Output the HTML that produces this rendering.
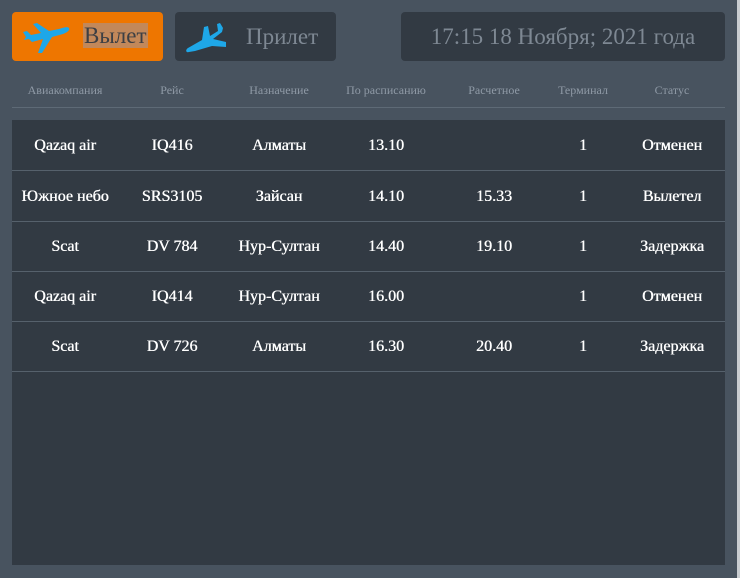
<!DOCTYPE html>
<html><head><meta charset="utf-8"><style>
html,body{margin:0;padding:0}
body{width:740px;height:578px;background:#48535f;position:relative;overflow:hidden;font-family:"Liberation Serif","DejaVu Serif",serif}
.btn{position:absolute;top:12px;height:49px;border-radius:4px}
.b1{left:12px;width:151px;background:#ee7600}
.b2{left:175px;width:161px;background:#323a43}
.b3{left:401px;width:324px;background:#323a43;color:#7e8893;font-size:23px;line-height:49px;text-align:center}
.b1 .t{position:absolute;left:71px;top:11px;height:25px;line-height:25px;padding:0 1px;background:#c2885a;color:#3c3f44;font-size:23px}
.b2 .t{position:absolute;left:71px;top:0;line-height:49px;color:#7e8893;font-size:23px}
.hd{position:absolute;top:83px;font-size:12px;color:#8f9aa6;transform:translateX(-50%);white-space:nowrap}
.hl{position:absolute;left:12px;width:713px;top:107px;height:1px;background:#5e6a76}
.panel{position:absolute;left:12px;top:120px;width:713px;height:445px;background:#323a43}
.row{position:absolute;left:0;width:713px;height:50px;border-bottom:1px solid #56616c}
.c{position:absolute;top:1px;line-height:50px;color:#fff;font-size:16px;text-shadow:0.4px 0 0 #fff;font-family:"Liberation Serif",serif;transform:translateX(-50%);white-space:nowrap}
.edge{position:absolute;right:0;top:0;width:3px;height:578px;background:#c9cdd1}
</style></head><body>
<div class="btn b1">
<svg style="position:absolute;left:10px;top:8px" width="50" height="34" viewBox="0 0 50 34"><path fill="#1ea7e8" d="M2 20 L7 19 L10 22 L21 19 L16 33 L20 33 L30 17 L41 14 C46 12 48 10 47 8 C45 6 41 8 37 9 L27 11 L15 3 L11 4 L19 13 L9 15 L5 11 L1 12 L4 17 Z"/></svg>
<div class="t">Вылет</div></div>
<div class="btn b2">
<svg style="position:absolute;left:10px;top:9px" width="46" height="34" viewBox="0 0 46 34"><path fill="#1ea7e8" d="M4 31 C1 32 0 29 3 27 L17 19 L19 6 L23 5 L25 15 L33 10 L32 3 L35 2 L38 7 L37 11 L28 18 L41 21 L41 26 L27 25 L10 30 Z"/></svg>
<div class="t">Прилет</div></div>
<div class="btn b3">17:15 18 Ноября; 2021 года</div>
<div class="hd" style="left:65px">Авиакомпания</div>
<div class="hd" style="left:172px">Рейс</div>
<div class="hd" style="left:279px">Назначение</div>
<div class="hd" style="left:386px">По расписанию</div>
<div class="hd" style="left:494px">Расчетное</div>
<div class="hd" style="left:583px">Терминал</div>
<div class="hd" style="left:672px">Статус</div>
<div class="hl"></div>
<div class="panel">
<div class="row" style="top:0"><div class="c" style="left:53px">Qazaq air</div><div class="c" style="left:160px">IQ416</div><div class="c" style="left:267px">Алматы</div><div class="c" style="left:374px">13.10</div><div class="c" style="left:571px">1</div><div class="c" style="left:660px">Отменен</div></div>
<div class="row" style="top:51px"><div class="c" style="left:53px">Южное небо</div><div class="c" style="left:160px">SRS3105</div><div class="c" style="left:267px">Зайсан</div><div class="c" style="left:374px">14.10</div><div class="c" style="left:482px">15.33</div><div class="c" style="left:571px">1</div><div class="c" style="left:660px">Вылетел</div></div>
<div class="row" style="top:101px"><div class="c" style="left:53px">Scat</div><div class="c" style="left:160px">DV 784</div><div class="c" style="left:267px">Нур-Султан</div><div class="c" style="left:374px">14.40</div><div class="c" style="left:482px">19.10</div><div class="c" style="left:571px">1</div><div class="c" style="left:660px">Задержка</div></div>
<div class="row" style="top:151px"><div class="c" style="left:53px">Qazaq air</div><div class="c" style="left:160px">IQ414</div><div class="c" style="left:267px">Нур-Султан</div><div class="c" style="left:374px">16.00</div><div class="c" style="left:571px">1</div><div class="c" style="left:660px">Отменен</div></div>
<div class="row" style="top:201px"><div class="c" style="left:53px">Scat</div><div class="c" style="left:160px">DV 726</div><div class="c" style="left:267px">Алматы</div><div class="c" style="left:374px">16.30</div><div class="c" style="left:482px">20.40</div><div class="c" style="left:571px">1</div><div class="c" style="left:660px">Задержка</div></div>
</div>
<div class="edge"></div>
</body></html>
